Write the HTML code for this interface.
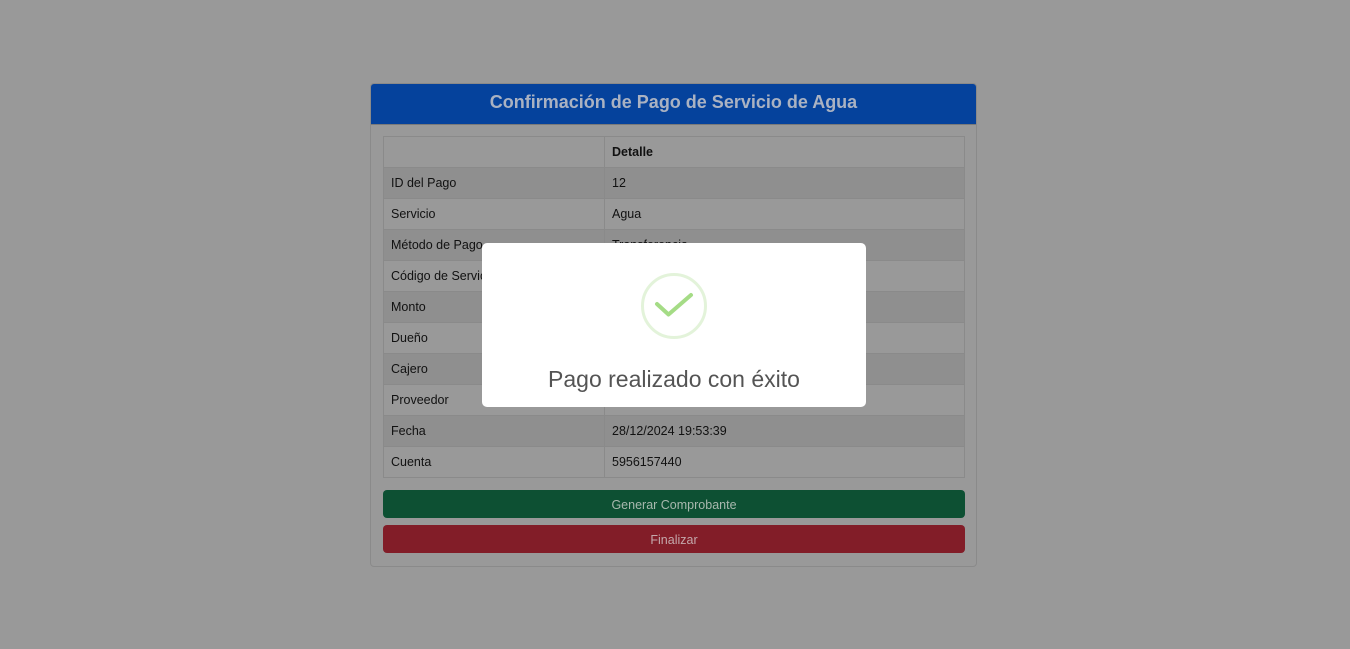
<!DOCTYPE html>
<html><head><meta charset="utf-8"><style>
body{margin:0;width:1350px;height:649px;background:#999;font-family:"Liberation Sans",sans-serif;position:relative;overflow:hidden}
.card{position:absolute;left:370px;top:83px;width:605px;height:482px;border:1px solid #8a8a8a;border-radius:4px;background:#999}
.hd{height:40px;background:#05429c;color:#aab2c2;font-size:18px;font-weight:bold;text-align:center;line-height:36px;border-radius:3px 3px 0 0;border-bottom:1px solid #7a7a7a}
table{position:absolute;left:12px;top:52px;width:582px;border-collapse:collapse;font-size:12.5px;color:#111}
td{border:1px solid #8a8a8a;height:31px;padding:0 7px;box-sizing:border-box}
tr:nth-child(even) td{background:#8f8f8f}
td:first-child{width:221px}
.btn{position:absolute;left:12px;width:582px;height:28px;border-radius:4px;text-align:center;line-height:30px;font-size:12.5px}
.g{top:406px;background:#0d5033;color:#a8b8ae}
.r{top:441px;background:#821d28;color:#c4a8ab}
.modal{position:absolute;left:482px;top:243px;width:384px;height:164px;background:#fff;border-radius:5px}
.modal .t{position:absolute;top:123px;width:100%;text-align:center;font-size:23px;color:#545454}
</style></head><body>
<div class="card">
<div class="hd">Confirmación de Pago de Servicio de Agua</div>
<table>
<tr><td></td><td><b>Detalle</b></td></tr>
<tr><td>ID del Pago</td><td>12</td></tr>
<tr><td>Servicio</td><td>Agua</td></tr>
<tr><td>Método de Pago</td><td>Transferencia</td></tr>
<tr><td>Código de Servicio</td><td>AG-001</td></tr>
<tr><td>Monto</td><td>150.00</td></tr>
<tr><td>Dueño</td><td>Juan</td></tr>
<tr><td>Cajero</td><td>Cajero</td></tr>
<tr><td>Proveedor</td><td>Empresa de Agua</td></tr>
<tr><td>Fecha</td><td>28/12/2024 19:53:39</td></tr>
<tr><td>Cuenta</td><td>5956157440</td></tr>
</table>
<div class="btn g">Generar Comprobante</div>
<div class="btn r">Finalizar</div>
</div>
<div class="modal">
<svg style="position:absolute;left:158px;top:29px" width="68" height="68" viewBox="0 0 68 68">
<circle cx="34" cy="34" r="31.5" fill="none" stroke="#e3f3da" stroke-width="3"/>
<path d="M17 32 L28.5 42.5 L51 23" fill="none" stroke="#a5dc86" stroke-width="4" stroke-linecap="round" stroke-linejoin="round"/>
</svg>
<div class="t">Pago realizado con éxito</div>
</div>
</body></html>
